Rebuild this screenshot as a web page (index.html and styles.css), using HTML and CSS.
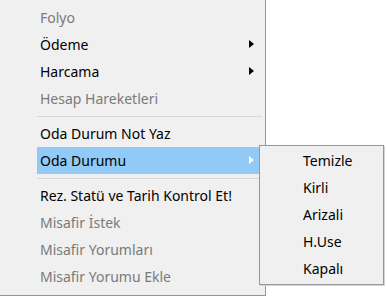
FILE: index.html
```html
<html>
<head>
    <title>Oda Menu</title>
    <meta charset="UTF-8">
    <link rel="stylesheet" href="styles.css">
</head>
<body>

    <div class="menu" id="main_menu">
        <div class="menu_item disabled">Folyo</div>
        <div class="menu_item has_sub">Ödeme</div>
        <div class="menu_item has_sub">Harcama</div>
        <div class="menu_item disabled">Hesap Hareketleri</div>
        <div class="menu_sep"></div>
        <div class="menu_item">Oda Durum Not Yaz</div>
        <div class="menu_item has_sub active">Oda Durumu</div>
        <div class="menu_sep"></div>
        <div class="menu_item">Rez. Statü ve Tarih Kontrol Et!</div>
        <div class="menu_item disabled">Misafir İstek</div>
        <div class="menu_item disabled">Misafir Yorumları</div>
        <div class="menu_item disabled">Misafir Yorumu Ekle</div>
    </div>

    <div class="submenu" id="oda_durumu_menu">
        <div class="sub_item">Temizle</div>
        <div class="sub_item">Kirli</div>
        <div class="sub_item">Arizali</div>
        <div class="sub_item">H.Use</div>
        <div class="sub_item">Kapalı</div>
    </div>

</body>
</html>
```

FILE: styles.css
```css
body{
    margin: 0;
    background-color: white;
    font-family: "Noto Sans", "Open Sans", sans-serif;
    font-size: 14px;
    color: black;
}

.menu{
    width: 265px;
    height: 288px;
    padding-top: 4px;
    padding-bottom: 3px;
    background-color: #f0f0f0;
    border-right: 1px solid #979797;
    border-bottom: 1px solid #979797;
}

.menu_item{
    height: 27px;
    line-height: 27px;
    margin-left: 37px;
    margin-right: 3px;
    padding-left: 3px;
    position: relative;
}

.menu_item.disabled{
    color: #7a7a7a;
}

.menu_item.has_sub:after{
    content: "";
    position: absolute;
    right: 8px;
    top: 9px;
    border-top: 4px solid transparent;
    border-bottom: 4px solid transparent;
    border-left: 5px solid black;
}

.menu_item.active{
    background-color: #91c9f7;
}

.menu_item.active:after{
    border-left-color: white;
}

.menu_sep{
    height: 1px;
    margin: 4px 3px 3px 37px;
    background-color: #d7d7d7;
}

.submenu{
    position: absolute;
    left: 259px;
    top: 145px;
    width: 123px;
    height: 137px;
    padding-top: 1px;
    background-color: #f0f0f0;
    border: 1px solid #979797;
    box-shadow: 1px 1px 0 #d4d4d4;
}

.sub_item{
    height: 27px;
    line-height: 27px;
    padding-left: 43px;
}
```
